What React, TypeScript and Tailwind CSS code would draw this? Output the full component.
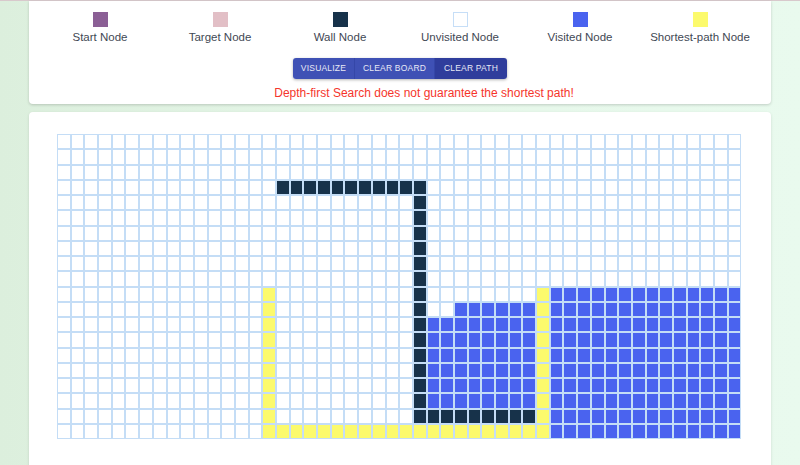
import React from "react";

const ROWS = 20;
const COLS = 50;

type Kind = "empty" | "wall" | "visited" | "path";

function buildGrid(): Kind[][] {
  const g: Kind[][] = Array.from({ length: ROWS }, () =>
    Array.from({ length: COLS }, () => "empty" as Kind)
  );
  // walls
  for (let c = 16; c <= 26; c++) g[3][c] = "wall";
  for (let r = 3; r <= 18; r++) g[r][26] = "wall";
  for (let c = 26; c <= 34; c++) g[18][c] = "wall";
  // visited
  for (let r = 10; r <= 19; r++) for (let c = 36; c < COLS; c++) g[r][c] = "visited";
  for (let c = 29; c <= 34; c++) g[11][c] = "visited";
  for (let r = 12; r <= 17; r++) for (let c = 27; c <= 34; c++) g[r][c] = "visited";
  // shortest path
  for (let r = 10; r <= 19; r++) {
    g[r][15] = "path";
    g[r][35] = "path";
  }
  for (let c = 15; c <= 35; c++) g[19][c] = "path";
  return g;
}

const cellColor: Record<Kind, string> = {
  empty: "bg-white",
  wall: "bg-[#17324a]",
  visited: "bg-[#4a63ef]",
  path: "bg-[#fcfa6c]",
};

const legend = [
  { label: "Start Node", cls: "bg-[#8b5f95]" },
  { label: "Target Node", cls: "bg-[#e2bfc6]" },
  { label: "Wall Node", cls: "bg-[#17324a]" },
  { label: "Unvisited Node", cls: "bg-white border border-[#c6def7]" },
  { label: "Visited Node", cls: "bg-[#4a63ef]" },
  { label: "Shortest-path Node", cls: "bg-[#fcfa6c]" },
];

export default function App() {
  const grid = buildGrid();

  return (
    <div
      className="h-[465px] w-full bg-gradient-to-r from-[#dcefdd] via-[#e6f7e9] to-[#e9faee] overflow-hidden"
      style={{ fontFamily: '"Liberation Sans", Arial, sans-serif' }}
    >
      <div className="h-px w-full bg-[#d8c9cc]" />
      <div className="px-[29px]">
        <div className="h-[103px] bg-white rounded-b shadow-[0_1px_3px_rgba(0,0,0,0.18)] flex flex-col items-center">
          <div className="grid grid-cols-6 w-full px-[11px] pt-[11px]">
            {legend.map((item) => (
              <div key={item.label} className="flex flex-col items-center">
                <div className={`w-[15px] h-[15px] ${item.cls}`} />
                <div className="mt-[2px] text-[11.5px] leading-[16px] text-[#3f4854]">
                  {item.label}
                </div>
              </div>
            ))}
          </div>
          <div className="mt-[13px] flex h-[21px] rounded-[3px] overflow-hidden shadow-[0_1px_3px_rgba(0,0,0,0.3)] text-[8.5px] text-[#e8eaf6] tracking-[0.2px]">
            <button className="w-[62px] bg-[#3f51b5] border-r border-[#3547a8]">
              VISUALIZE
            </button>
            <button className="w-[80px] bg-[#3f51b5] border-r border-[#3547a8]">
              CLEAR BOARD
            </button>
            <button className="w-[72px] bg-[#2f3d9c]">CLEAR PATH</button>
          </div>
          <div className="mt-[6px] ml-[48px] text-[12px] leading-[16px] text-[#f5352b]">
            Depth-first Search does not guarantee the shortest path!
          </div>
        </div>

        <div className="mt-[8px] h-[360px] bg-white rounded-t shadow-[0_1px_3px_rgba(0,0,0,0.12)] pl-[28px] pt-[22px]">
          <div className="grid grid-cols-[repeat(50,13.7px)] w-[685px]">
            {grid.map((row, r) =>
              row.map((k, c) => (
                <div
                  key={`${r}-${c}`}
                  className={`h-[15.25px] border border-[#c4ddf6] ${cellColor[k]}`}
                />
              ))
            )}
          </div>
        </div>
      </div>
    </div>
  );
}
